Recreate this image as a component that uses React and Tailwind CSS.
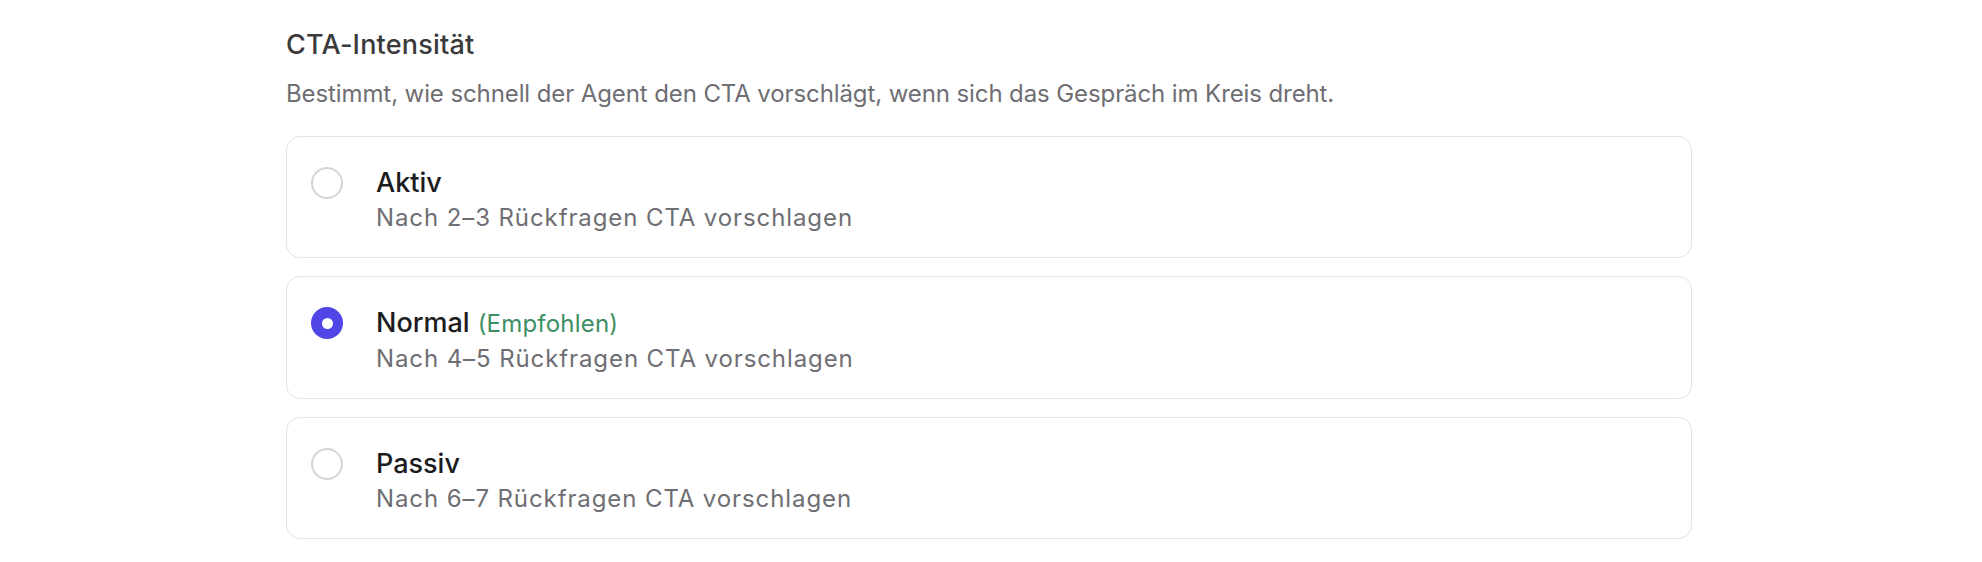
import { useState } from 'react';

const options = [
  { id: 'aktiv', label: 'Aktiv', hint: 'Nach 2–3 Rückfragen CTA vorschlagen' },
  { id: 'normal', label: 'Normal', tag: '(Empfohlen)', hint: 'Nach 4–5 Rückfragen CTA vorschlagen' },
  { id: 'passiv', label: 'Passiv', hint: 'Nach 6–7 Rückfragen CTA vorschlagen' },
];

function Radio({ checked }) {
  if (checked) {
    return (
      <span className="flex h-[32px] w-[32px] shrink-0 items-center justify-center rounded-full bg-[#4f46e5]">
        <span className="h-[11px] w-[11px] rounded-full bg-white" />
      </span>
    );
  }
  return <span className="h-[32px] w-[32px] shrink-0 rounded-full border-2 border-[#d4d4d8] bg-white" />;
}

export default function App() {
  const [value, setValue] = useState('normal');

  return (
    <div className="min-h-screen bg-white pl-[286px] pr-[290px] pt-[29px] font-['Inter',sans-serif] antialiased">
      <h3 className="text-[27px] leading-[32px] font-medium tracking-[0.2px] text-[#3a3a3c]">CTA-Intensität</h3>
      <p className="mt-[19px] text-[24px] leading-[28px] tracking-[-0.1px] text-[#6e6e73]">
        Bestimmt, wie schnell der Agent den CTA vorschlägt, wenn sich das Gespräch im Kreis dreht.
      </p>
      <div className="mt-[28px] flex flex-col gap-[18px]">
        {options.map((o) => (
          <button
            key={o.id}
            type="button"
            onClick={() => setValue(o.id)}
            className="flex items-start gap-[33px] rounded-[14px] border border-[#e3e3e6] bg-white pl-[24px] pr-6 pt-[30px] pb-[25px] text-left"
          >
            <Radio checked={value === o.id} />
            <div>
              <div className="text-[27px] leading-[32px] font-medium text-[#1c1c1e]">
                {o.label}
                {o.tag && (
                  <span className="ml-[8px] text-[24px] font-normal tracking-[0.2px] text-[#3d8f63]">{o.tag}</span>
                )}
              </div>
              <div className="mt-[5px] text-[24px] leading-[28px] tracking-[0.9px] text-[#6e6e73]">{o.hint}</div>
            </div>
          </button>
        ))}
      </div>
    </div>
  );
}
